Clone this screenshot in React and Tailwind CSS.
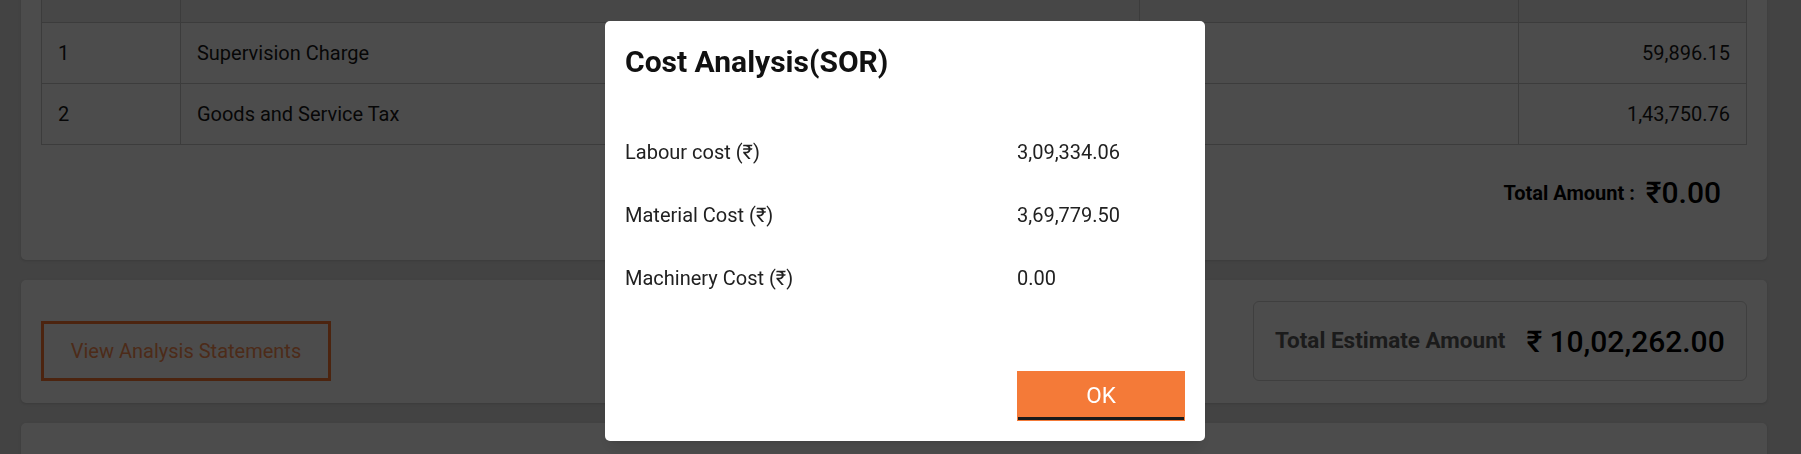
import { useState } from "react";

const charges = [
  { id: 1, name: "Supervision Charge", amount: "59,896.15" },
  { id: 2, name: "Goods and Service Tax", amount: "1,43,750.76" },
];

const costs = [
  { label: "Labour cost (₹)", value: "3,09,334.06" },
  { label: "Material Cost (₹)", value: "3,69,779.50" },
  { label: "Machinery Cost (₹)", value: "0.00" },
];

function App() {
  const [showAnalysis, setShowAnalysis] = useState(true);

  return (
    <div className="relative h-screen overflow-hidden bg-[#dfdfdf] font-['Roboto',sans-serif] text-[20px] text-[#1a1a1a]">
      <div className="-mt-[78px] flex flex-col gap-[20px] pl-[21px] pr-[34px]">
        {/* Other charges */}
        <div className="rounded-[5px] bg-white px-5 pb-[49px] pt-5 shadow-sm">
          <table className="w-full border-collapse border border-[#c8c8c8]">
            <thead>
              <tr className="h-[80px] bg-[#ededed]">
                <th className="w-[139px] border border-[#c8c8c8]"></th>
                <th className="w-[960px] border border-[#c8c8c8]"></th>
                <th className="w-[379px] border border-[#c8c8c8]"></th>
                <th className="w-[228px] border border-[#c8c8c8]"></th>
              </tr>
            </thead>
            <tbody>
              {charges.map((row) => (
                <tr key={row.id} className="h-[61px]">
                  <td className="border border-[#c8c8c8] px-4">{row.id}</td>
                  <td className="border border-[#c8c8c8] px-4">{row.name}</td>
                  <td className="border border-[#c8c8c8] px-4"></td>
                  <td className="border border-[#c8c8c8] px-4 text-right">{row.amount}</td>
                </tr>
              ))}
            </tbody>
          </table>
          <div className="mt-[30px] flex items-center justify-end gap-[11px] pr-[26px]">
            <span className="font-bold text-black">Total Amount :</span>
            <span className="text-[30px] font-medium leading-9 text-black">₹0.00</span>
          </div>
        </div>

        {/* Estimate summary */}
        <div className="flex items-end justify-between rounded-[5px] bg-white px-5 pb-[22px] pt-[21px] shadow-sm">
          <button
            onClick={() => setShowAnalysis(true)}
            className="h-[60px] w-[290px] border-[3px] border-[#ff7a33] text-[#ff8f55]"
          >
            View Analysis Statements
          </button>
          <div className="flex h-[80px] w-[494px] items-center gap-[21px] rounded-[6px] border border-[#d2d2d2] px-[21px]">
            <span className="text-[22.5px] font-bold text-[#5c5c5c]">Total Estimate Amount</span>
            <span className="text-[30px] font-medium text-black">₹ 10,02,262.00</span>
          </div>
        </div>

        <div className="h-[120px] rounded-[5px] bg-white shadow-sm"></div>
      </div>

      {showAnalysis && (
        <div className="fixed inset-0 flex items-start justify-center bg-black/70 pl-[9px] pt-[21px]">
          <div className="flex h-[420px] w-[600px] flex-col rounded-[5px] bg-white px-5 pb-5 pt-[23px] shadow-lg">
            <h2 className="text-[30px] font-bold leading-9 text-[#111]">Cost Analysis(SOR)</h2>
            <div className="mt-[60px] flex flex-col gap-[39px]">
              {costs.map((c) => (
                <div key={c.label} className="grid grid-cols-[392px_1fr] leading-6 text-[#212121]">
                  <span>{c.label}</span>
                  <span>{c.value}</span>
                </div>
              ))}
            </div>
            <button
              onClick={() => setShowAnalysis(false)}
              className="mt-auto h-[50px] w-[168px] self-end border border-[#f47a38] bg-[#f47a38] text-[22.5px] text-white shadow-[inset_0_-3px_0_#1a1a1a]"
            >
              OK
            </button>
          </div>
        </div>
      )}
    </div>
  );
}

export default App;
